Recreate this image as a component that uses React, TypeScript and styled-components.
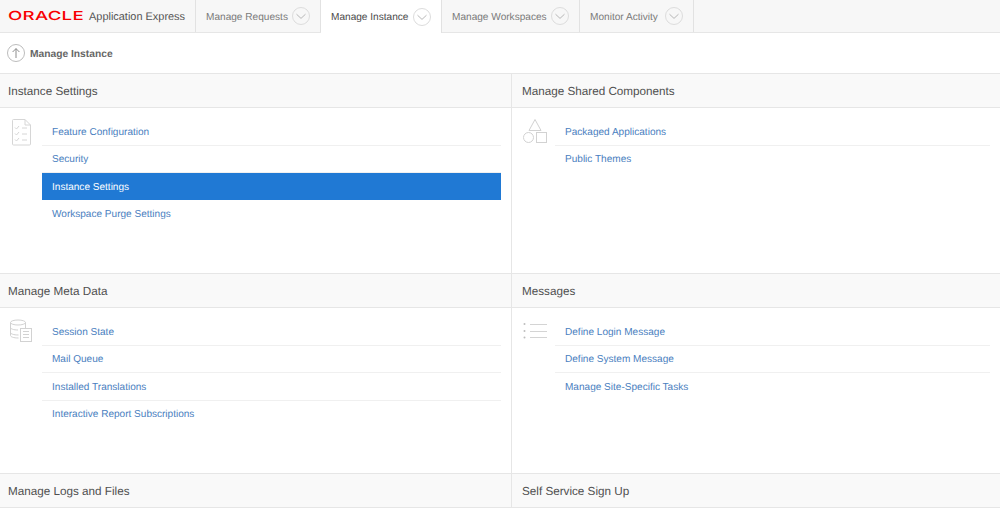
import React from 'react';
import styled, { createGlobalStyle } from 'styled-components';

const GlobalStyle = createGlobalStyle`
  html, body {
    margin: 0;
    padding: 0;
    background: #fff;
    overflow: hidden;
  }
  body {
    font-family: "Liberation Sans", Arial, sans-serif;
    -webkit-font-smoothing: antialiased;
    text-rendering: geometricPrecision;
  }
`;

const Page = styled.div`
  width: 1000px;
  height: 509px;
  display: flex;
  flex-direction: column;
  overflow: hidden;
`;

const TopBar = styled.header`
  height: 33px;
  box-sizing: border-box;
  display: flex;
  background: #f7f7f7;
  border-bottom: 1px solid #e6e6e6;
`;

const Brand = styled.div`
  width: 196px;
  padding: 1px 0 0 8px;
  box-sizing: border-box;
  display: flex;
  align-items: center;
  height: 32px;
  border-right: 1px solid #e2e2e2;
`;

const OracleWord = styled.span`
  font-family: Inter, "Liberation Sans", sans-serif;
  font-size: 12.4px;
  font-weight: 500;
  line-height: 1;
  color: #f80000;
  letter-spacing: 0.2px;
  width: 77px;
  display: inline-block;
  transform: scaleX(1.5);
  transform-origin: left center;
`;

const AppName = styled.span`
  margin-left: 4px;
  font-size: 10.95px;
  color: #555;
  white-space: nowrap;
`;

const Tab = styled.div<{ $active?: boolean; $width: number }>`
  width: ${(p) => p.$width}px;
  height: ${(p) => (p.$active ? 33 : 32)}px;
  box-sizing: border-box;
  display: flex;
  align-items: center;
  justify-content: space-between;
  padding: 0 10px;
  font-size: 10.1px;
  white-space: nowrap;
  color: ${(p) => (p.$active ? '#4a4a4a' : '#7a7a7a')};
  background: ${(p) => (p.$active ? '#fff' : '#f7f7f7')};
  border-right: 1px solid #e2e2e2;
  position: relative;
  z-index: 1;
`;

const TabLabel = styled.span<{ $active?: boolean }>`
  padding-top: ${(p) => (p.$active ? 1 : 2)}px;
`;

const RoundIcon = styled.svg`
  flex: none;
  display: block;
`;

const Crumb = styled.div`
  height: 40px;
  display: flex;
  align-items: center;
  padding-left: 7px;
  gap: 5px;
  font-size: 10.25px;
  font-weight: 700;
  color: #666;
  background: #fff;
`;

const CrumbLabel = styled.span`
  padding-top: 2px;
`;

const Grid = styled.main`
  display: grid;
  grid-template-columns: 512px 488px;
`;

const Section = styled.section<{ $first?: boolean }>`
  box-sizing: border-box;
  border-right: ${(p) => (p.$first ? '1px solid #e6e6e6' : '0')};
`;

const SectionTitle = styled.h2<{ $first?: boolean }>`
  margin: 0;
  height: 35px;
  box-sizing: border-box;
  display: flex;
  align-items: center;
  padding: 1px 0 0 ${(p) => (p.$first ? 8 : 10)}px;
  font-size: 11.7px;
  font-weight: 400;
  color: #505050;
  background: #f9f9f9;
  border-top: 1px solid #e6e6e6;
  border-bottom: 1px solid #e6e6e6;
`;

const SectionBody = styled.div<{ $first?: boolean }>`
  height: 165px;
  box-sizing: border-box;
  display: flex;
  padding: 10px 10px 0 ${(p) => (p.$first ? 10 : 11)}px;
  background: #fff;
`;

const IconSlot = styled.div`
  width: 32px;
  flex: none;
`;

const LinkList = styled.ul`
  flex: 1;
  list-style: none;
  margin: 0;
  padding: 0;
`;

const LinkRow = styled.li<{ $selected?: boolean }>`
  height: ${(p) => (p.$selected ? 27 : 27.5)}px;
  margin-bottom: ${(p) => (p.$selected ? 0.5 : 0)}px;
  box-sizing: border-box;
  display: flex;
  align-items: center;
  padding: 2px 0 0 10px;
  font-size: 10.05px;
  color: ${(p) => (p.$selected ? '#fff' : '#4a80c0')};
  background: ${(p) => (p.$selected ? '#2079d4' : 'transparent')};
  border-bottom: 1px solid ${(p) => (p.$selected ? '#2079d4' : '#f0f0f0')};

  &:last-child {
    border-bottom-color: transparent;
  }
`;

const SlotSvg = styled.svg`
  display: block;
`;

const Chevron = () => (
  <RoundIcon width="18" height="18" viewBox="0 0 18 18" fill="none">
    <circle cx="9" cy="9" r="8.5" stroke="#dcdcdc" />
    <path d="M4.5 7.2 9 11.4l4.5-4.2" stroke="#b0b0b0" strokeWidth="0.9" />
  </RoundIcon>
);

const UpArrow = () => (
  <RoundIcon width="18" height="18" viewBox="0 0 18 18" fill="none">
    <circle cx="9" cy="9" r="8.5" stroke="#bcbcbc" />
    <path d="M9 14V4.6M5.6 8 9 4.6 12.4 8" stroke="#808080" strokeWidth="0.9" />
  </RoundIcon>
);

const ChecklistIcon = () => (
  <SlotSvg width="30" height="30" viewBox="0 0 30 30" fill="none" stroke="#d6d6d6" strokeWidth="1">
    <path d="M2.5 2.5a1 1 0 0 1 1-1H15l5.5 5.5v19a1 1 0 0 1-1 1h-16a1 1 0 0 1-1-1z" />
    <path d="M15 1.5V7h5.5" />
    <path d="M5 9.5l1.5 1.5L9 8M12 10h5M5 15.5l1.5 1.5L9 14M12 16h5M5 21.5l1.5 1.5L9 20M12 22h5" />
  </SlotSvg>
);

const ShapesIcon = () => (
  <SlotSvg width="30" height="30" viewBox="0 0 30 30" fill="none" stroke="#d2d2d2" strokeWidth="1">
    <path d="M12 1.5 18 12.5H6z" />
    <circle cx="5.5" cy="19.5" r="5" />
    <rect x="13.5" y="14.5" width="10" height="10" />
  </SlotSvg>
);

const DatabaseIcon = () => (
  <SlotSvg width="30" height="30" viewBox="0 0 30 30" fill="none" stroke="#d2d2d2" strokeWidth="1">
    <ellipse cx="8" cy="4.5" rx="7.5" ry="2.5" />
    <path d="M.5 4.5v13c0 1.3 3 2.5 8 2.5M15.5 4.5V10M.5 9.5c0 1.3 3 2.5 7.5 2.5M.5 14.5c0 1.3 3 2.5 8 2.5" />
    <rect x="10.5" y="10.5" width="11" height="13" fill="#fff" />
    <path d="M13 13.5h6M13 16.5h6M13 19.5h6" />
  </SlotSvg>
);

const ListIcon = () => (
  <SlotSvg width="30" height="30" viewBox="0 0 30 30" fill="none">
    <g fill="#bdbdbd">
      <circle cx="1.5" cy="6" r="1" />
      <circle cx="1.5" cy="13" r="1" />
      <circle cx="1.5" cy="19.5" r="1" />
    </g>
    <path d="M7 6.5h17M7 13.5h17M7 19.5h17" stroke="#d4d4d4" />
  </SlotSvg>
);

const tabs = [
  { label: 'Manage Requests', width: 125 },
  { label: 'Manage Instance', width: 121, active: true },
  { label: 'Manage Workspaces', width: 138 },
  { label: 'Monitor Activity', width: 114 },
];

const sections = [
  {
    title: 'Instance Settings',
    icon: <ChecklistIcon />,
    links: ['Feature Configuration', 'Security', 'Instance Settings', 'Workspace Purge Settings'],
    selected: 'Instance Settings',
  },
  {
    title: 'Manage Shared Components',
    icon: <ShapesIcon />,
    links: ['Packaged Applications', 'Public Themes'],
  },
  {
    title: 'Manage Meta Data',
    icon: <DatabaseIcon />,
    links: ['Session State', 'Mail Queue', 'Installed Translations', 'Interactive Report Subscriptions'],
  },
  {
    title: 'Messages',
    icon: <ListIcon />,
    links: ['Define Login Message', 'Define System Message', 'Manage Site-Specific Tasks'],
  },
  { title: 'Manage Logs and Files', links: [] as string[] },
  { title: 'Self Service Sign Up', links: [] as string[] },
];

export default function App() {
  return (
    <Page>
      <GlobalStyle />
      <TopBar>
        <Brand>
          <OracleWord>ORACLE</OracleWord>
          <AppName>Application Express</AppName>
        </Brand>
        {tabs.map((tab) => (
          <Tab key={tab.label} $active={tab.active} $width={tab.width}>
            <TabLabel $active={tab.active}>{tab.label}</TabLabel>
            <Chevron />
          </Tab>
        ))}
      </TopBar>
      <Crumb>
        <UpArrow />
        <CrumbLabel>Manage Instance</CrumbLabel>
      </Crumb>
      <Grid>
        {sections.map((section, i) => (
          <Section key={section.title} $first={i % 2 === 0}>
            <SectionTitle $first={i % 2 === 0}>{section.title}</SectionTitle>
            {section.icon && (
              <SectionBody $first={i % 2 === 0}>
                <IconSlot>{section.icon}</IconSlot>
                <LinkList>
                  {section.links.map((link) => (
                    <LinkRow key={link} $selected={link === section.selected}>
                      {link}
                    </LinkRow>
                  ))}
                </LinkList>
              </SectionBody>
            )}
          </Section>
        ))}
      </Grid>
    </Page>
  );
}
